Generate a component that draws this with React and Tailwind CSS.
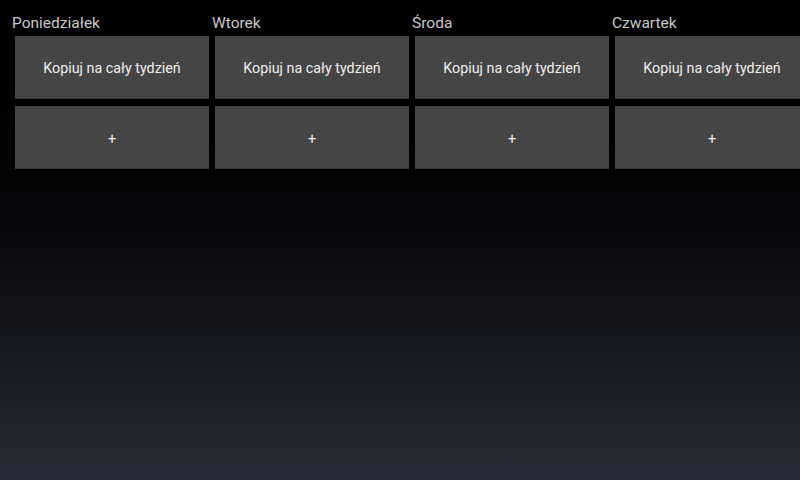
import React from 'react';

const days = ['Poniedziałek', 'Wtorek', 'Środa', 'Czwartek'];

function DayColumn({ name }) {
    return (
        <div className="w-[200px] shrink-0 flex flex-col">
            <div className="h-[36px] pt-[12px] text-[15.5px] leading-[22px] text-[#c8c8c8]">{name}</div>
            <div className="pl-[3px] pr-[3px] flex flex-col gap-[7px]">
                <button className="h-[63px] w-full pt-[4px] bg-[#454545] border-b border-[#3a3a3a] text-[14.3px] text-[#f0f0f0] flex items-center justify-center">
                    Kopiuj na cały tydzień
                </button>
                <button className="h-[63px] w-full pt-[5px] bg-[#454545] border-b border-[#3a3a3a] text-[14.3px] text-[#f0f0f0] flex items-center justify-center">
                    +
                </button>
            </div>
        </div>
    );
}

function App() {
    return (
        <div className="w-[800px] h-[480px] overflow-hidden bg-gradient-to-b from-[#000000] to-[#282b35] font-['Roboto',sans-serif]">
            <div className="flex pl-[12px]">
                {days.map((d) => (
                    <DayColumn key={d} name={d} />
                ))}
            </div>
        </div>
    );
}

export default App;
